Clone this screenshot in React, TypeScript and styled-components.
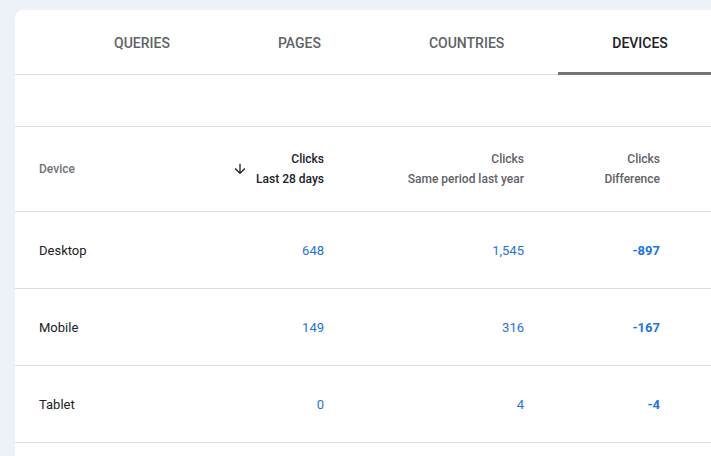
import { createGlobalStyle } from "styled-components";
import styled from "styled-components";

const GlobalStyle = createGlobalStyle`
    html, body {
        margin: 0;
        padding: 0;
        background: #edf1f8;
        font-family: Roboto, "Noto Sans", Arial, sans-serif;
        overflow: hidden;
    }
`

const Page = styled.div`
    padding: 10px 0 0 15px;
    height: 456px;
    box-sizing: border-box;
`

const Card = styled.div`
    background: #ffffff;
    border-radius: 8px 0 0 0;
    height: 100%;
    overflow: hidden;
`

const TabBar = styled.div`
    display: flex;
    height: 64px;
    padding-left: 45px;
    border-bottom: 1px solid #e0e0e0;
`

const Tab = styled.div<{ $active?: boolean }>`
    display: flex;
    align-items: center;
    justify-content: center;
    flex-shrink: 0;
    padding: 0 54px;
    font-size: 14px;
    font-weight: 500;
    color: ${p => p.$active ? "#202124" : "#5f6368"};
    box-shadow: ${p => p.$active ? "inset 0 -3px 0 #757575" : "none"};
    margin-bottom: -1px;
    cursor: pointer;
`

const FilterBar = styled.div`
    height: 51px;
    border-bottom: 1px solid #e0e0e0;
`

const Row = styled.div<{ $header?: boolean }>`
    display: grid;
    grid-template-columns: 185px 124px 200px 136px 1fr;
    align-items: center;
    height: ${p => p.$header ? "84px" : "76px"};
    border-bottom: 1px solid #e0e0e0;
`

const LabelCell = styled.div<{ $header?: boolean }>`
    padding-left: 24px;
    font-size: ${p => p.$header ? "12px" : "13px"};
    font-weight: ${p => p.$header ? 500 : 400};
    color: ${p => p.$header ? "#6f7378" : "#202124"};
`

const HeadCell = styled.div<{ $sorted?: boolean }>`
    display: flex;
    align-items: center;
    justify-content: flex-end;
    gap: 8px;
    font-size: 12px;
    font-weight: 500;
    line-height: 20px;
    color: ${p => p.$sorted ? "#202124" : "#5f6368"};
    text-align: right;
`

const NumCell = styled.div<{ $bold?: boolean }>`
    text-align: right;
    font-size: 13px;
    font-weight: ${p => p.$bold ? 700 : 400};
    color: #1a73e8;
`

function SortArrow() {
    return (
        <svg width="16" height="16" viewBox="0 0 24 24" aria-hidden="true">
            <path fill="#202124" d="M20 12l-1.41-1.41L13 16.17V4h-2v12.17l-5.58-5.59L4 12l8 8 8-8z" />
        </svg>
    )
}

const rows = [
    { device: "Desktop", clicks: "648", last: "1,545", diff: "-897" },
    { device: "Mobile", clicks: "149", last: "316", diff: "-167" },
    { device: "Tablet", clicks: "0", last: "4", diff: "-4" },
]

export default function App() {
    return (
        <Page>
            <GlobalStyle />
            <Card>
                <TabBar>
                    <Tab>QUERIES</Tab>
                    <Tab>PAGES</Tab>
                    <Tab>COUNTRIES</Tab>
                    <Tab $active>DEVICES</Tab>
                </TabBar>
                <FilterBar />
                <Row $header>
                    <LabelCell $header>Device</LabelCell>
                    <HeadCell $sorted>
                        <SortArrow />
                        <div>Clicks<br />Last 28 days</div>
                    </HeadCell>
                    <HeadCell>
                        <div>Clicks<br />Same period last year</div>
                    </HeadCell>
                    <HeadCell>
                        <div>Clicks<br />Difference</div>
                    </HeadCell>
                </Row>
                {rows.map(r => (
                    <Row key={r.device}>
                        <LabelCell>{r.device}</LabelCell>
                        <NumCell>{r.clicks}</NumCell>
                        <NumCell>{r.last}</NumCell>
                        <NumCell $bold>{r.diff}</NumCell>
                    </Row>
                ))}
            </Card>
        </Page>
    )
}
